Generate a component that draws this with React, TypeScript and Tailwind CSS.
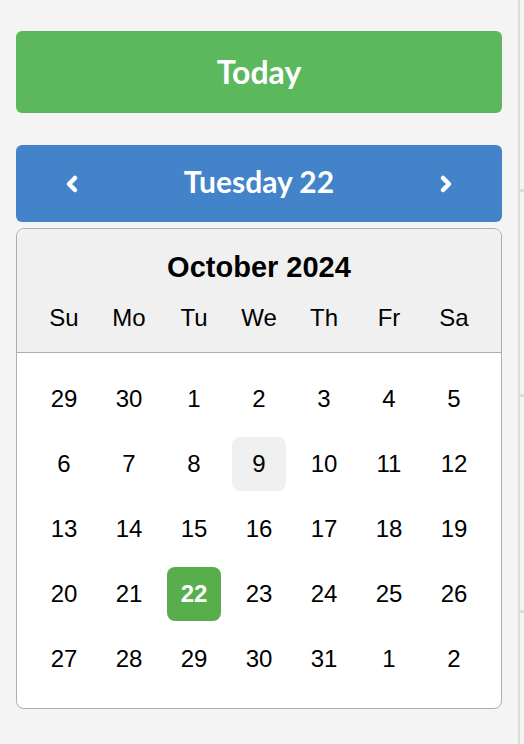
import { ChevronLeft, ChevronRight } from "lucide-react";

const weekdays = ["Su", "Mo", "Tu", "We", "Th", "Fr", "Sa"];

const weeks = [
  [29, 30, 1, 2, 3, 4, 5],
  [6, 7, 8, 9, 10, 11, 12],
  [13, 14, 15, 16, 17, 18, 19],
  [20, 21, 22, 23, 24, 25, 26],
  [27, 28, 29, 30, 31, 1, 2],
];

export default function App() {
  return (
    <div className="flex min-h-[744px] w-[524px] bg-[#f4f4f4]">
      <div className="w-[518px] px-4 pt-[31px]">
        <button className="flex h-[82px] w-full items-center justify-center rounded-md bg-[#5cb85c] font-['Lato',sans-serif] text-[32px] font-bold text-white">
          Today
        </button>

        <div className="mt-[32px] flex h-[77px] items-center justify-between rounded-md bg-[#4383c9] px-[44px] font-['Lato',sans-serif] text-white">
          <ChevronLeft className="h-[24px] w-[24px]" strokeWidth={4.5} />
          <span className="pb-1 text-[30px] font-bold">Tuesday 22</span>
          <ChevronRight className="h-[24px] w-[24px]" strokeWidth={4.5} />
        </div>

        <div className="mt-[6px] overflow-hidden rounded-lg border border-[#aeaeae] bg-white font-['Liberation_Sans',Arial,sans-serif] text-black">
          <div className="border-b border-[#aeaeae] bg-[#f0f0f0] pt-[21px] pb-[19px]">
            <div className="text-center text-[29px] leading-[34px] font-bold">October 2024</div>
            <div className="mt-[19px] grid grid-cols-[repeat(7,54px)] justify-center gap-x-[11px] text-[24px] leading-[30px]">
              {weekdays.map((d) => (
                <div key={d} className="text-center">
                  {d}
                </div>
              ))}
            </div>
          </div>

          <div className="grid grid-cols-[repeat(7,54px)] justify-center gap-x-[11px] gap-y-[11px] pt-[19px] pb-[22px] text-[24px]">
            {weeks.flatMap((week, wi) =>
              week.map((day, di) => {
                const selected = wi === 3 && day === 22;
                const hovered = wi === 1 && day === 9;
                return (
                  <div
                    key={`${wi}-${di}`}
                    className={
                      "flex h-[54px] items-center justify-center rounded-lg " +
                      (selected
                        ? "bg-[#57ae4b] font-bold text-white"
                        : hovered
                          ? "bg-[#f0f0f0]"
                          : "")
                    }
                  >
                    {day}
                  </div>
                );
              })
            )}
          </div>
        </div>
      </div>

      <div className="flex w-[6px] flex-col border-l-2 border-[#dddddd]">
        <div className="mt-[189px] h-[3px] bg-[#dddddd]" />
        <div className="mt-[202px] h-[3px] bg-[#dddddd]" />
        <div className="mt-[213px] h-[3px] bg-[#dddddd]" />
      </div>
    </div>
  );
}
